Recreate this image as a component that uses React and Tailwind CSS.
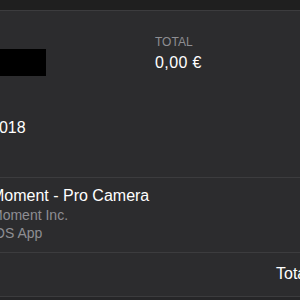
import React from 'react'

export default function App() {
  return (
    <div className="w-[300px] h-[300px] overflow-hidden bg-[#2c2c2e] text-white font-['Liberation_Sans',Arial,sans-serif]">
      {/* Top bar */}
      <div className="h-[11px] bg-[#1f1f1f] border-b border-[#3c3c3e]"></div>

      {/* Summary */}
      <div className="flex h-[166px]">
        <div className="w-[165px] ml-[-10px] flex flex-col">
          <div className="mt-[38px] h-[27px] w-[56px] bg-black"></div>
          <div className="mt-[42px] text-[16px] leading-[20px] whitespace-nowrap">2018</div>
        </div>
        <div className="flex flex-col pt-[24px]">
          <div className="text-[12px] leading-[14px] text-[#8e8e93]">TOTAL</div>
          <div className="mt-[4px] text-[16px] leading-[20px] tracking-[0.4px] whitespace-nowrap">0,00 €</div>
        </div>
      </div>

      {/* Item */}
      <div className="border-t border-[#3c3c3e] h-[75px] ml-[-9px] pt-[8px] whitespace-nowrap">
        <div className="text-[16px] leading-[20px]">Moment - Pro Camera</div>
        <div className="text-[14px] leading-[18px] text-[#8e8e93]">Moment Inc.</div>
        <div className="text-[14px] leading-[18px] text-[#8e8e93]">iOS App</div>
      </div>

      {/* Total row */}
      <div className="border-t border-[#3c3c3e] h-[44px] pl-[276px] pt-[11px] whitespace-nowrap">
        <div className="text-[16px] leading-[20px]">Total</div>
      </div>
      <div className="border-t border-[#3c3c3e] h-[10px] bg-[#262628]"></div>
    </div>
  )
}
